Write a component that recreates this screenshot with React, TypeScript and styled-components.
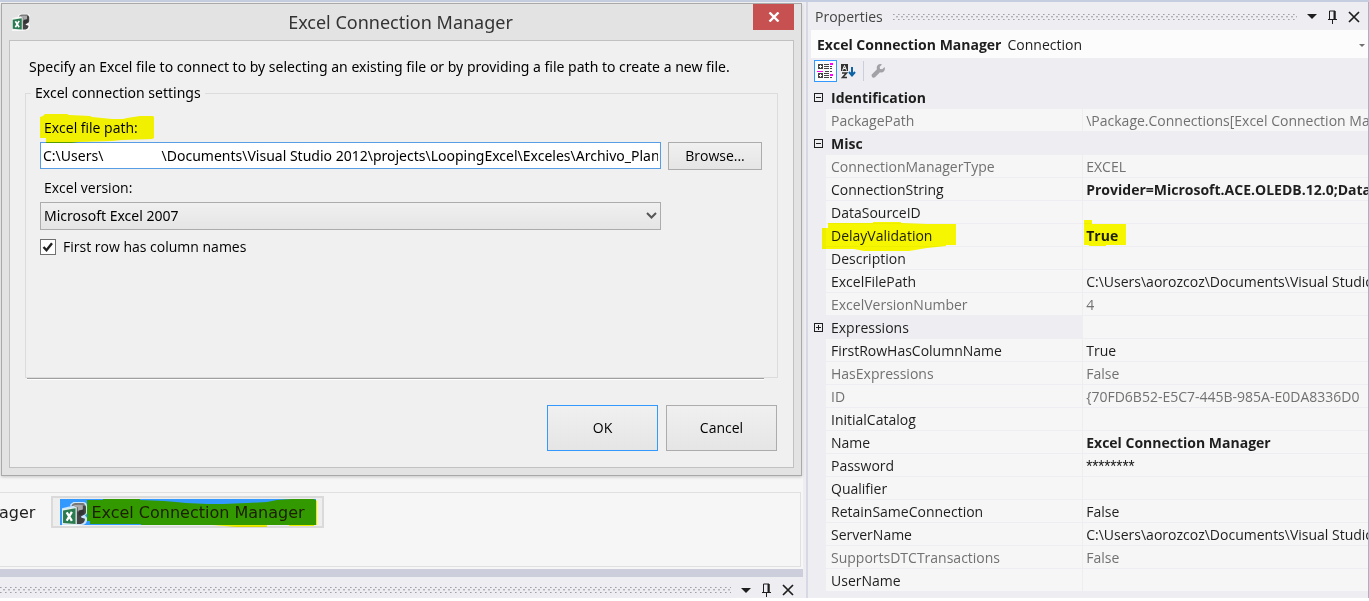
import React from 'react';
import styled, { createGlobalStyle, css } from 'styled-components';

const Global = createGlobalStyle`
  *, *::before, *::after { box-sizing: border-box; }
  body { margin: 0; background: #fff; font-family: "Open Sans", "Noto Sans", sans-serif; font-size: 14px; line-height: 20px; color: #1e1e1e; }
  button, input, select { font: inherit; color: inherit; }
`;

const Page = styled.div`
  display: grid;
  grid-template-columns: minmax(0, 808fr) minmax(0, 561fr);
  border-top: 2px solid #c5cde0;
  background: #eeeef2;
  margin-bottom: 3px;
`;

const Workspace = styled.div`
  display: flex;
  flex-direction: column;
  border-right: 2px solid #d6d8e4;
`;

const Designer = styled.main`
  display: flex;
  flex-direction: column;
  margin-right: 3px;
  background: #f6f6f6;
  border-bottom: 8px solid #cccedb;
  padding: 1px 1px 2px 0;
`;

const Dialog = styled.section`
  display: flex;
  flex-direction: column;
  margin-left: 1px;
  border: 1px solid #a9a9a9;
  background: #e3e3e3;
  padding: 0 7px 7px;
  box-shadow: 0 1px 3px rgba(0, 0, 0, 0.2);
`;

const TitleBar = styled.header`
  display: grid;
  grid-template-columns: 36px 1fr 41px;
  height: 36px;
  align-items: center;
  padding-left: 3px;
`;

const DialogTitle = styled.h1`
  margin: 0;
  font-family: "Noto Sans", sans-serif;
  font-size: 18px;
  line-height: 24px;
  font-weight: 400;
  text-align: center;
  color: #333;
`;

const CloseButton = styled.button`
  align-self: start;
  display: grid;
  place-items: center;
  width: 41px;
  height: 26px;
  padding: 0;
  border: 0;
  background: #c75050;
`;

const Client = styled.form`
  border: 1px solid #c1c1c1;
  background: #f0f0f0;
  padding: 16px 15px;
  color: #000;
`;

const Intro = styled.p`
  margin: 0 0 6px 4px;
  font-family: "Noto Sans", sans-serif;
`;

const Group = styled.fieldset`
  min-width: 0;
  min-height: 295px;
  margin: 0;
  border: 1px solid #dcdcdc;
  padding: 15px 15px 0 14px;
`;

const Legend = styled.legend`
  margin-left: -9px;
  padding: 0 4px;
  font-family: "Noto Sans", sans-serif;
`;

const FieldLabel = styled.label`
  position: relative;
  display: block;
  width: max-content;
  padding-left: 4px;
  margin-bottom: 4px;
`;

const FieldRow = styled.div`
  display: grid;
  grid-template-columns: 1fr 94px;
  gap: 7px;
  margin-bottom: 8px;
`;

const PathInput = styled.input`
  min-width: 0;
  height: 27px;
  border: 1px solid #569de5;
  background: #fff;
  padding: 0 2px;
  outline: 0;
  font-family: "Noto Sans", sans-serif;
`;

const face = css`
  border: 1px solid #acacac;
  border-radius: 0;
  background: linear-gradient(#f0f0f0, #e5e5e5);
`;

const PushButton = styled.button<{ $large?: boolean; $primary?: boolean }>`
  ${face}
  padding: 0;
  height: ${p => (p.$large ? 46 : 28)}px;
  width: ${p => (p.$large ? '111px' : 'auto')};
  ${p => p.$primary && 'border-color: #3399ff;'}
`;

const SelectBox = styled.span`
  position: relative;
  display: grid;
`;

const VersionSelect = styled.select`
  ${face}
  appearance: none;
  height: 28px;
  padding: 0 3px;
  font-family: "Noto Sans", sans-serif;
`;

const SelectArrow = styled.svg`
  position: absolute;
  right: 4px;
  top: 10px;
  pointer-events: none;
`;

const CheckRow = styled.label`
  display: flex;
  align-items: center;
  gap: 7px;
  width: max-content;
  line-height: 18px;
`;

const Check = styled.input`
  appearance: none;
  width: 16px;
  height: 16px;
  margin: 0;
  border: 1px solid #707070;
  background: #fff;
  &:checked {
    background: #fff url("data:image/svg+xml,%3Csvg xmlns='http://www.w3.org/2000/svg' viewBox='0 0 14 14'%3E%3Cpath d='M2.500 7l3 3.200 5.500-7' fill='none' stroke='%23212121' stroke-width='2.400'/%3E%3C/svg%3E") center / 14px 14px;
  }
`;

const Divider = styled.hr`
  margin: 0 14px 25px 2px;
  height: 2px;
  border: 0;
  border-top: 1px solid #a0a0a0;
  background: #fff;
`;

const Actions = styled.div`
  display: flex;
  justify-content: flex-end;
  gap: 8px;
  padding-right: 1px;
`;

const Tray = styled.div`
  display: flex;
  align-items: flex-start;
  gap: 16px;
  min-height: 75px;
  margin: 16px 1px 0 0;
  padding-top: 3px;
  border: 1px solid #e0e0e0;
  border-left: 0;
  font-family: "DejaVu Sans", sans-serif;
  font-size: 16px;
  line-height: 26px;
`;

const TrayText = styled.span`
  padding-top: 4px;
  margin-left: -1px;
`;

const TrayItem = styled.button`
  border: 2px solid #dadada;
  background: #eee;
  padding: 1px 6px 1px 7px;
`;

const Selected = styled.span`
  position: relative;
  display: flex;
  align-items: center;
  gap: 4px;
  height: 26px;
  padding: 2px 11px 0 2px;
  background: #3399ff;
`;

const Marker = styled.svg<{ $x: number; $y: number }>`
  position: absolute;
  left: ${p => p.$x}px;
  top: ${p => p.$y}px;
  fill: #ff0;
  mix-blend-mode: multiply;
  pointer-events: none;
`;

const Marked = styled.span`
  position: relative;
  display: block;
`;

const PaneHeader = styled.header`
  display: flex;
  align-items: center;
  gap: 10px;
  height: 28px;
  padding: 1px 8px 0 4px;
  color: #444;
`;

const DockHeader = styled(PaneHeader)`
  height: 21px;
  padding: 5px 12px 0 0;
`;

const Grip = styled.span`
  flex: 1;
  height: 6px;
  background:
    conic-gradient(from 270deg at 1px 1px, #a0a0a8 90deg, transparent 0) 0 0 / 5px 5px,
    conic-gradient(from 270deg at 1px 1px, #c0c0c6 90deg, transparent 0) 1px 0 / 5px 5px,
    conic-gradient(from 270deg at 2px 1px, #b2b2b9 90deg, transparent 0) 3px 2px / 5px 5px,
    conic-gradient(from 270deg at 2px 1px, #d2d2d8 90deg, transparent 0) 3px 3px / 5px 5px;
`;

const PaneButtons = styled.span`
  display: flex;
  align-items: center;
  gap: 10px;
`;

const IconButton = styled.button`
  display: grid;
  place-items: center;
  padding: 0;
  border: 0;
  background: none;
`;

const Properties = styled.aside`
  min-width: 0;
  overflow: hidden;
  padding-left: 3px;
  border-right: 1px solid #a3b1cc;
`;

const ObjectPicker = styled.div`
  display: flex;
  align-items: center;
  gap: 6px;
  height: 28px;
  padding: 2px 3px 0 6px;
  background: #fcfcfc;
`;

const ObjectType = styled.span`
  flex: 1;
`;

const Toolbar = styled.div`
  display: flex;
  align-items: center;
  height: 28px;
  padding: 0 3px 2px;
`;

const ToolButton = styled(IconButton)<{ $active?: boolean }>`
  width: 23px;
  height: 22px;
  border: 1px solid ${p => (p.$active ? '#3399ff' : 'transparent')};
  background: ${p => (p.$active ? '#fcfcfc' : 'none')};
`;

const Separator = styled.span`
  width: 1px;
  height: 20px;
  margin: 0 2px 0 3px;
  background: #cccedb;
`;

const PropertyTable = styled.table`
  width: 100%;
  table-layout: fixed;
  border-spacing: 0;
  text-align: left;
`;

const GutterColumn = styled.col`
  width: 15px;
`;

const NameColumn = styled.col`
  width: 46%;
`;

const Gutter = styled.td`
  padding: 0 0 0 3px;
`;

const NameCell = styled.th<{ $muted?: boolean; $header?: boolean; $plain?: boolean }>`
  padding: 2px 0 0 5px;
  font-weight: ${p => (p.$header ? 700 : 400)};
  color: ${p => (p.$muted ? '#717171' : '#1e1e1e')};
  background: ${p => (p.$header || p.$plain ? '#eeeef2' : '#f6f6f6')};
  border-bottom: 1px solid #eeeef2;
`;

const ValueCell = styled.td<{ $muted?: boolean; $bold?: boolean; $secret?: boolean }>`
  padding: 2px 0 0 3px;
  white-space: nowrap;
  font-weight: ${p => (p.$bold ? 700 : 400)};
  font-family: ${p => (p.$secret ? 'Roboto, sans-serif' : 'inherit')};
  color: ${p => (p.$muted ? '#717171' : '#1e1e1e')};
  background: #f6f6f6;
  border-left: 1px solid #eeeef2;
  border-bottom: 1px solid #eeeef2;
`;

const Expander = ({ open }: { open: boolean }) => (
  <IconButton aria-label={open ? 'Collapse' : 'Expand'}>
    <svg width="9" height="9" shapeRendering="crispEdges" fill="none" stroke="#1e1e1e">
      <path d={open ? 'M.5 .5h8v8h-8zM2 4.5h5' : 'M.5 .5h8v8h-8zM2 4.5h5M4.5 2v5'} />
    </svg>
  </IconButton>
);

const ExcelIcon = ({ size }: { size: number }) => (
  <svg width={size} height={size} viewBox="0 0 24 24">
    <path d="M8 6V3l3-2h9q4 0 4 4v7l-2 2 2 2v3q-1 4-5 4l-5 1H0V7l8-2z" fill="#fff" opacity=".75" />
    <path d="M14 4h8q1 0 1 2v5q0 2-3 3-3 1-1 2l3 1q0 4-4 5h-4z" fill="#444" />
    <path d="M9 5q1-3 4-3h7q2 0 2 2h-8z" fill="#777" />
    <path d="M12 4q4-1 8 0v5q-3 1-5 1V6l-3 0z" fill="#aaa" />
    <path d="M16 9q2 0 5-1v4q-2 2-5 2z" fill="#333" />
    <path d="M0 8l14-2v17L0 22z" fill="#e4efe9" />
    <path d="M1 9l12-2v15L1 21z" fill="#2a7b50" />
    <path d="M4.500 11l5 8M9.500 10.500l-5 8.500" stroke="#fff" strokeWidth="2.200" />
  </svg>
);

const PaneIcons = () => (
  <PaneButtons>
    <IconButton aria-label="Window position">
      <svg width="10" height="5"><path d="M0 0h10L5 5z" fill="#1e1e1e" /></svg>
    </IconButton>
    <IconButton aria-label="Auto hide">
      <svg width="11" height="14" fill="none" stroke="#1e1e1e"><path d="M2.500 9V1H8v8M1 9.500h9M5.500 10v4" /><path d="M7.500 1v8" strokeWidth="2" /></svg>
    </IconButton>
    <IconButton aria-label="Close">
      <svg width="12" height="12" stroke="#1e1e1e" strokeWidth="1.700"><path d="M1 1l10 10M11 1L1 11" /></svg>
    </IconButton>
  </PaneButtons>
);

const CategorizedIcon = () => (
  <svg width="17" height="16" viewBox="0 0 17 16" shapeRendering="crispEdges" fill="none">
    <path d="M1 1h5v5H1zM1 10h5v5H1z" fill="#444" />
    <path d="M2 3.500h3M3.500 2v3M2 12.500h3M3.500 11v3" stroke="#fff" />
    <path d="M7 1.500h5M7 3.500h5M7 5.500h5M8 8.500h4M7 10.500h5M7 12.500h5M7 14.500h5M13 3.500h2M13 5.500h2M13 8.500h2M13 14.500h2" stroke="#444" />
    <path d="M0 8.500h6" stroke="#f0f" />
    <path d="M13 0h3v2h-3zM13 11h3v2h-3z" fill="#f0f" />
  </svg>
);

const SortIcon = () => (
  <svg width="15" height="15" viewBox="0 0 15 15" fill="none">
    <path d="M0 0h7v7H0z" fill="#333" />
    <path d="M1.500 6.500L3.500 1.500l2 5M2.500 4.500h2" stroke="#fff" />
    <path d="M1 9h4.500L1.500 13.500H6" stroke="#333" strokeWidth="1.600" />
    <path d="M11 3v8M8 8l3 3.500L14 8" stroke="#0b63a5" strokeWidth="2" />
  </svg>
);

const WrenchIcon = () => (
  <svg width="14" height="14" viewBox="0 0 14 14" fill="#a2a2a6">
    <path d="M9.500 0L11 .4 8.700 2.800 9 5l2.200.3L13.600 3q.8 2.500-.6 4.200-1.600 1.700-4 1L4 13.300q-1.200 1-2.700-.1Q0 11.600 1 10.300l5-5q-.8-2.300.6-4Q7.800 0 9.500 0z" />
  </svg>
);

type Row = { name: string; value?: string; muted?: boolean; bold?: boolean; header?: boolean; plain?: boolean; marked?: boolean; secret?: boolean };

const rows: Row[] = [
  { name: 'Identification', header: true },
  { name: 'PackagePath', value: '\\Package.Connections[Excel Connection Manager]', muted: true },
  { name: 'Misc', header: true },
  { name: 'ConnectionManagerType', value: 'EXCEL', muted: true },
  { name: 'ConnectionString', value: 'Provider=Microsoft.ACE.OLEDB.12.0;Data', bold: true },
  { name: 'DataSourceID' },
  { name: 'DelayValidation', value: 'True', bold: true, marked: true },
  { name: 'Description' },
  { name: 'ExcelFilePath', value: 'C:\\Users\\aorozcoz\\Documents\\Visual Studio' },
  { name: 'ExcelVersionNumber', value: '4', muted: true },
  { name: 'Expressions', plain: true },
  { name: 'FirstRowHasColumnName', value: 'True' },
  { name: 'HasExpressions', value: 'False', muted: true },
  { name: 'ID', value: '{70FD6B52-E5C7-445B-985A-E0DA8336D0', muted: true },
  { name: 'InitialCatalog' },
  { name: 'Name', value: 'Excel Connection Manager', bold: true },
  { name: 'Password', value: '********', secret: true },
  { name: 'Qualifier' },
  { name: 'RetainSameConnection', value: 'False' },
  { name: 'ServerName', value: 'C:\\Users\\aorozcoz\\Documents\\Visual Studio' },
  { name: 'SupportsDTCTransactions', value: 'False', muted: true },
  { name: 'UserName' },
];

const filePath = 'C:\\Users\\' + '\u00a0'.repeat(16) + '\\Documents\\Visual Studio 2012\\projects\\LoopingExcel\\Exceles\\Archivo_Plantilla.xlsx';

const PropertyRow = ({ row }: { row: Row }) => (
  <tr>
    <Gutter>{(row.header || row.plain) && <Expander open={!!row.header} />}</Gutter>
    <NameCell scope="row" colSpan={row.header ? 2 : 1} $muted={row.muted} $header={row.header} $plain={row.plain}>
      {row.marked ? (
        <Marked>
          {row.name}
          <Marker $x={-9} $y={-4} width="134" height="30">
            <path d="M0 6h6V1h45V0h28v1l26 1h29v21h-10v1l-19 2-18 3H42l-10-2H0z" />
          </Marker>
        </Marked>
      ) : row.name}
    </NameCell>
    {!row.header && (
      <ValueCell $muted={row.muted} $bold={row.bold} $secret={row.secret}>
        {row.marked ? (
          <Marked>
            {row.value}
            <Marker $x={-2} $y={-6} width="42" height="26">
              <path d="M0 0h8v4h34v21H22v1H5v-1H0z" />
            </Marker>
          </Marked>
        ) : row.value}
      </ValueCell>
    )}
  </tr>
);

export default function App() {
  return (
    <>
      <Global />
      <Page>
        <Workspace>
          <Designer>
            <Dialog role="dialog" aria-labelledby="dialog-title">
              <TitleBar>
                <ExcelIcon size={18} />
                <DialogTitle id="dialog-title">Excel Connection Manager</DialogTitle>
                <CloseButton aria-label="Close">
                  <svg width="12" height="10" stroke="#fff" strokeWidth="2.400"><path d="M1.500 .5l9 9M10.500 .5l-9 9" /></svg>
                </CloseButton>
              </TitleBar>
              <Client onSubmit={e => e.preventDefault()}>
                <Intro>Specify an Excel file to connect to by selecting an existing file or by providing a file path to create a new file.</Intro>
                <Group>
                  <Legend>Excel connection settings</Legend>
                  <FieldLabel htmlFor="path">
                    Excel file path:
                    <Marker $x={0} $y={-4} width="114" height="30">
                      <path d="M0 3l3-1 2-2h22l2 1 21 1 2 1 20 2 11 0 4-1 13-2h13l1 1v21l-2 1-30 1-10 1-34 1-6 1H6v-5H0z" />
                    </Marker>
                  </FieldLabel>
                  <FieldRow>
                    <PathInput id="path" defaultValue={filePath} />
                    <PushButton type="button">Browse...</PushButton>
                  </FieldRow>
                  <FieldLabel htmlFor="version">Excel version:</FieldLabel>
                  <FieldRow>
                    <SelectBox>
                      <VersionSelect id="version"><option>Microsoft Excel 2007</option></VersionSelect>
                      <SelectArrow width="11" height="8" fill="none" stroke="#555" strokeWidth="2"><path d="M1 1l4.500 4.500L10 1" /></SelectArrow>
                    </SelectBox>
                  </FieldRow>
                  <CheckRow><Check type="checkbox" defaultChecked />First row has column names</CheckRow>
                </Group>
                <Divider />
                <Actions>
                  <PushButton $large $primary>OK</PushButton>
                  <PushButton $large type="button">Cancel</PushButton>
                </Actions>
              </Client>
            </Dialog>
            <Tray>
              <TrayText>ager</TrayText>
              <TrayItem>
                <Selected>
                  <ExcelIcon size={25} />
                  Excel Connection Manager
                  <Marker $x={27} $y={0} width="230" height="30">
                    <path d="M0 1h16V0h37v1l24 1 12 1 10 1 22 1h15l24-1 20-1 10-2 15-1h22l3 2v24h-3v1h-25v-1h-22v2h-31l-24-2H54v-1H3v-3H0z" />
                  </Marker>
                </Selected>
              </TrayItem>
            </Tray>
          </Designer>
          <DockHeader><Grip /><PaneIcons /></DockHeader>
        </Workspace>
        <Properties>
          <PaneHeader>Properties<Grip /><PaneIcons /></PaneHeader>
          <ObjectPicker>
            <b>Excel Connection Manager</b>
            <ObjectType>Connection</ObjectType>
            <IconButton aria-label="Choose object">
              <svg width="6" height="3"><path d="M0 0h6L3 3z" fill="#717171" /></svg>
            </IconButton>
          </ObjectPicker>
          <Toolbar>
            <ToolButton $active aria-label="Categorized"><CategorizedIcon /></ToolButton>
            <ToolButton aria-label="Alphabetical"><SortIcon /></ToolButton>
            <Separator />
            <ToolButton aria-label="Property pages"><WrenchIcon /></ToolButton>
          </Toolbar>
          <PropertyTable>
            <colgroup>
              <GutterColumn />
              <NameColumn />
              <col />
            </colgroup>
            <tbody>
              {rows.map(row => <PropertyRow key={row.name} row={row} />)}
            </tbody>
          </PropertyTable>
        </Properties>
      </Page>
    </>
  );
}
